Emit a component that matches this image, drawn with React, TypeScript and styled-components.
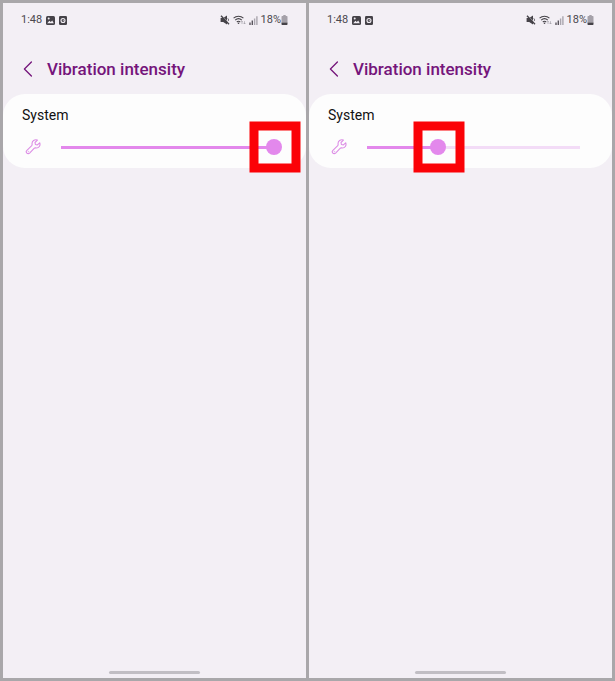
import React, { useId, useState } from "react";
import styled, { createGlobalStyle } from "styled-components";

const GlobalStyle = createGlobalStyle`
  *, *::before, *::after { box-sizing: border-box; }
  body { margin: 0; background: #a9a7aa; font-family: Roboto, "Noto Sans", sans-serif; }
`;

const Page = styled.main`
  display: grid;
  grid-template-columns: 1fr 1fr;
  gap: 3px;
  padding: 3px;
  min-height: 100vh;
`;

const Phone = styled.section`
  display: flex;
  flex-direction: column;
  min-width: 0;
  background: #f3eff5;
`;

const StatusBar = styled.div`
  display: flex;
  align-items: center;
  justify-content: space-between;
  height: 34px;
  padding: 0 18px;
  color: #4b484e;
  font-size: 11px;
  line-height: 16px;
`;

const StatusGroup = styled.div<{ $gap: number }>`
  display: flex;
  align-items: center;
  gap: ${(p) => p.$gap}px;
`;

const Header = styled.header`
  display: flex;
  align-items: center;
  gap: 11px;
  height: 57px;
  padding: 6px 17px 0;
`;

const BackButton = styled.button`
  display: flex;
  align-items: center;
  justify-content: center;
  width: 16px;
  height: 24px;
  padding: 0;
  border: 0;
  background: none;
  color: #75157b;
  cursor: pointer;
`;

const Title = styled.h1`
  margin: 0;
  color: #75157b;
  font-size: 17px;
  font-weight: 500;
  line-height: 24px;
`;

const Card = styled.div`
  height: 74px;
  padding: 11px 24px 0 19px;
  border-radius: 22px;
  background: #fdfdfd;
`;

const Label = styled.label`
  display: block;
  color: #111;
  font-size: 14px;
  line-height: 20px;
`;

const SliderRow = styled.div`
  display: flex;
  align-items: center;
  gap: 10px;
  height: 24px;
  margin-top: 10px;
`;

const SliderBox = styled.div`
  position: relative;
  display: flex;
  align-items: center;
  flex: 1;
  min-width: 0;
  height: 24px;
`;

const Slider = styled.input`
  --stop: calc(8px + (100% - 16px) * var(--level));
  appearance: none;
  width: 100%;
  height: 16px;
  margin: 0;
  background: none;
  cursor: pointer;

  &::-webkit-slider-runnable-track {
    height: 3px;
    background: linear-gradient(
      to right,
      transparent 7px,
      #e388ec 7px var(--stop),
      #f3dcf7 var(--stop) calc(100% - 8px),
      transparent calc(100% - 8px)
    );
  }
  &::-webkit-slider-thumb {
    appearance: none;
    width: 16px;
    height: 16px;
    margin-top: -7px;
    border-radius: 50%;
    background: #e388ec;
  }
`;

const Highlight = styled.span`
  position: absolute;
  top: 50%;
  left: calc(9px + (100% - 16px) * var(--level));
  width: 51px;
  height: 51px;
  border: 9px solid #fb0207;
  transform: translate(-50%, -50%);
  pointer-events: none;
`;

const HomeBar = styled.div`
  align-self: center;
  width: 30%;
  height: 3px;
  margin: auto 0 4px;
  border-radius: 2px;
  background: #c1bec4;
`;

const PictureIcon = () => (
  <svg width="9" height="9" viewBox="0 0 9 9" aria-hidden="true">
    <rect width="9" height="9" rx="1.5" fill="#454248" />
    <path d="M1.2 7.2 3.4 4.8l1.4 1.3L6.2 4.6l1.6 2.6Z" fill="#f3eff5" />
    <circle cx="2.7" cy="2.6" r="1" fill="#f3eff5" />
  </svg>
);

const ClockIcon = () => (
  <svg width="8" height="9" viewBox="0 0 8 9" aria-hidden="true">
    <rect width="8" height="9" rx="1.2" fill="#454248" />
    <circle cx="4" cy="4.5" r="2" fill="none" stroke="#f3eff5" strokeWidth="1.1" />
    <path d="M4 3.3v1.2h1" fill="none" stroke="#f3eff5" strokeWidth=".5" />
  </svg>
);

const MuteIcon = () => (
  <svg width="10" height="10" viewBox="0 0 10 10" aria-hidden="true">
    <path d="M.6 3h2.6L7 .6v8.8L3.2 7H.6Z" fill="#454248" />
    <path d="M1.9.8 9.5 8.4" stroke="#f3eff5" strokeWidth=".8" />
    <path d="M1 .8 9 9.2" stroke="#454248" strokeWidth="1.3" />
    <path d="M7.8 3.4c.8.9.9 1.6.5 2.5" fill="none" stroke="#454248" strokeWidth=".9" />
  </svg>
);

const WifiIcon = () => (
  <svg width="13" height="10" viewBox="0 0 13 10" fill="none" stroke="#454248" aria-hidden="true">
    <path d="M.6 3.2C3.4.6 7.6.6 10.4 3.2M2.2 5.2c1.9-1.8 4.7-1.8 6.6 0M3.8 7c1-.9 2.4-.9 3.4 0" strokeWidth="1.1" />
    <circle cx="5.5" cy="8.2" r=".8" fill="#454248" stroke="none" />
    <path d="M9 9V6.2M8 7.2l1-1 1 1M11.5 6.2V9m-1-1 1 1 1-1" stroke="#99959d" strokeWidth=".6" />
  </svg>
);

const SignalIcon = () => (
  <svg width="9" height="9" viewBox="0 0 9 9" aria-hidden="true">
    <path d="M.3 6.5h1.4V9H.3ZM2.6 4.5H4V9H2.6Z" fill="#59555d" />
    <path d="M4.9 2.5h1.4V9H4.9ZM7.2.3h1.4V9H7.2Z" fill="#aaa6ae" />
  </svg>
);

const BatteryIcon = () => (
  <svg width="7" height="10" viewBox="0 0 7 10" aria-hidden="true">
    <path d="M2.3 0h2.4v1h1.1a.7.7 0 0 1 .7.7V7.6h-6V1.7a.7.7 0 0 1 .7-.7h1.1Z" fill="#a5a1a9" />
    <path d="M.5 7.6h6v1.6a.7.7 0 0 1-.7.7H1.2a.7.7 0 0 1-.7-.7Z" fill="#454248" />
  </svg>
);

const BackIcon = () => (
  <svg width="10" height="16" viewBox="0 0 10 16" fill="none" stroke="currentColor" strokeWidth="1.3" strokeLinecap="round" strokeLinejoin="round" aria-hidden="true">
    <path d="M8.4 1 1.4 8l7 7" />
  </svg>
);

const WrenchIcon = () => (
  <svg width="22" height="16" viewBox="0 0 22 16" fill="none" stroke="#dc8de5" strokeWidth="1.1" strokeLinejoin="round" aria-hidden="true">
    <path d="M15.4 1.1c-2.6-1-5.8.8-5.3 4.2.1.7-.1 1.1-.6 1.6l-4.6 4.4a1.9 1.9 0 0 0 2.7 2.8l4.5-4.7c.5-.5 1-.6 1.6-.5 3.3.5 5-2.5 4-5.1l-2.3 2.1-2-.4-.4-2Z" />
    <circle cx="6.5" cy="12.7" r=".4" strokeWidth=".6" />
  </svg>
);

function VibrationScreen({ initialLevel }: { initialLevel: number }) {
  const [level, setLevel] = useState(initialLevel);
  const id = useId();
  const levelStyle = { "--level": level / 100 } as React.CSSProperties;

  return (
    <Phone>
      <StatusBar>
        <StatusGroup $gap={4}>
          <span>1:48</span>
          <PictureIcon />
          <ClockIcon />
        </StatusGroup>
        <StatusGroup $gap={3}>
          <MuteIcon />
          <WifiIcon />
          <SignalIcon />
          <StatusGroup $gap={0}>
            <span>18%</span>
            <BatteryIcon />
          </StatusGroup>
        </StatusGroup>
      </StatusBar>
      <Header>
        <BackButton type="button" aria-label="Back">
          <BackIcon />
        </BackButton>
        <Title>Vibration intensity</Title>
      </Header>
      <Card>
        <Label htmlFor={id}>System</Label>
        <SliderRow>
          <WrenchIcon />
          <SliderBox style={levelStyle}>
            <Slider
              id={id}
              type="range"
              min={0}
              max={100}
              value={level}
              onChange={(e) => setLevel(Number(e.target.value))}
            />
            <Highlight />
          </SliderBox>
        </SliderRow>
      </Card>
      <HomeBar />
    </Phone>
  );
}

export default function App() {
  return (
    <>
      <GlobalStyle />
      <Page>
        <VibrationScreen initialLevel={100} />
        <VibrationScreen initialLevel={33} />
      </Page>
    </>
  );
}
